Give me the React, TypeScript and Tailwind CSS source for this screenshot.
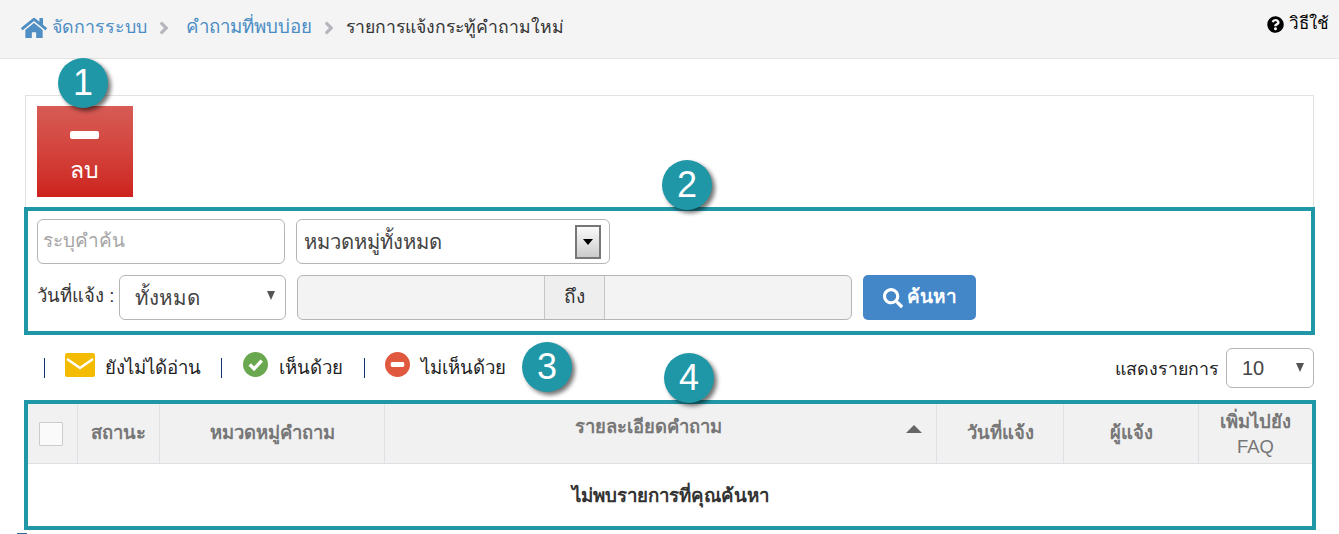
import { FaHome, FaSearch, FaQuestionCircle, FaAngleRight } from 'react-icons/fa'

const FONT = '"Liberation Sans", "Noto Sans", sans-serif'

function Badge({ n, className }: { n: number; className: string }) {
  return (
    <div className={`absolute w-[50px] h-[50px] rounded-full bg-[#1f97a7] text-white text-[36px] leading-[50px] text-center shadow-[3px_3px_4px_rgba(0,0,0,0.55)] ${className}`}>
      {n}
    </div>
  )
}

function Caret({ className = '' }: { className?: string }) {
  return <span className={`w-0 h-0 border-x-[4px] border-x-transparent border-t-[9px] border-t-[#555] ${className}`} />
}

const COLS = [
  { label: 'สถานะ', w: 'w-[82px]' },
  { label: 'หมวดหมู่คำถาม', w: 'w-[225px]' },
]

export default function App() {
  return (
    <div className="relative w-[1339px] h-[534px] bg-white overflow-hidden text-[#333]" style={{ fontFamily: FONT }}>
      {/* Breadcrumb */}
      <div className="h-[59px] bg-[#f4f4f4] border-b border-[#e4e4e4] flex items-start justify-between pl-[21px] pr-[10px]">
        <div className="flex items-center h-[55px]">
          <FaHome className="w-[26px] h-[24px] text-[#4f8fc4]" />
          <span className="ml-[5px] text-[17.8px] text-[#4a8dc4]">จัดการระบบ</span>
          <FaAngleRight className="w-[16px] h-[20px] ml-[9px] mr-[14px] text-[#b5b5bd]" />
          <span className="text-[18.7px] text-[#4a8dc4]">คำถามที่พบบ่อย</span>
          <FaAngleRight className="w-[16px] h-[20px] ml-[9px] mr-[9px] text-[#b5b5bd]" />
          <span className="text-[17.6px] text-[#333]">รายการแจ้งกระทู้คำถามใหม่</span>
        </div>
        <div className="flex items-center gap-[5px] h-[48px] text-[17px] text-black">
          <FaQuestionCircle className="w-[17px] h-[17px]" />
          วิธีใช้
        </div>
      </div>

      {/* Toolbar panel */}
      <div className="mt-[36px] ml-[25px] mr-[25px] h-[113px] border-x border-t border-[#e2e2e2] pt-[10px] pl-[11px]">
        <div className="w-[96px] h-[91px] bg-gradient-to-b from-[#d75b55] to-[#cd211c] flex flex-col items-center text-white">
          <div className="mt-[25px] -ml-[2px] w-[29px] h-[8px] bg-white rounded-[2px]" />
          <span className="mt-[16px] -ml-[1px] text-[23px] leading-[30px]">ลบ</span>
        </div>
      </div>

      {/* Search box */}
      <div className="ml-[24px] w-[1291px] h-[128px] border-[4px] border-[#1f97a7] pt-[8px] pl-[9px] -mt-[1px]">
        <div className="flex gap-[11px]">
          <div className="w-[248px] h-[45px] border border-[#b5b5b5] rounded-[6px] flex items-center px-[5px] text-[19px] text-[#a5a5a5]">ระบุคำค้น</div>
          <div className="w-[314px] h-[45px] border border-[#b5b5b5] rounded-[6px] flex items-center justify-between pl-[7px] pr-[8px] text-[20.2px] text-[#444]">
            <span className="mt-[2px]">หมวดหมู่ทั้งหมด</span>
            <span className="w-[26px] h-[34px] border-2 border-[#777] bg-gradient-to-b from-[#fafafa] to-[#ccc] flex items-center justify-center">
              <span className="w-0 h-0 border-x-[5px] border-x-transparent border-t-[6px] border-t-black" />
            </span>
          </div>
        </div>
        <div className="flex items-center mt-[11px] h-[45px]">
          <span className="w-[82px] text-[18.5px] -mt-[4px]">วันที่แจ้ง :</span>
          <div className="w-[167px] h-[45px] border border-[#b5b5b5] rounded-[6px] flex items-center justify-between pl-[15px] pr-[10px] text-[20.5px] text-[#444]">
            <span className="mt-[1px]">ทั้งหมด</span>
            <Caret className="-mt-[4px]" />
          </div>
          <div className="ml-[11px] w-[555px] h-[45px] border border-[#b5b5b5] rounded-[6px] bg-[#f3f3f3] flex overflow-hidden">
            <div className="w-[246px]" />
            <div className="w-[61px] border-x border-[#c5c5c5] bg-[#eee] flex items-center justify-center text-[19px]">ถึง</div>
            <div className="flex-1" />
          </div>
          <button className="ml-[11px] w-[113px] h-[45px] rounded-[5px] bg-[#4387c9] text-white font-bold text-[19px] flex items-center justify-center gap-[4px]">
            <FaSearch className="w-[20px] h-[20px]" />
            ค้นหา
          </button>
        </div>
      </div>

      {/* Legend */}
      <div className="h-[65px] flex items-center justify-between pl-[44px] pr-[25px] text-[18.6px] text-[#222]">
        <div className="flex items-center">
          <span className="w-px h-[20px] bg-[#123070] mt-[2px]" />
          <svg viewBox="0 0 30 24" className="ml-[20px] w-[30px] h-[24px] -mt-[5px]">
            <rect width="30" height="24" rx="2" fill="#f3bc00" />
            <path d="M2 6l13 9 13-9" fill="none" stroke="#fff" strokeWidth="2.5" />
          </svg>
          <span className="ml-[10px]">ยังไม่ได้อ่าน</span>
          <span className="ml-[20px] w-px h-[20px] bg-[#123070] mt-[2px]" />
          <svg viewBox="0 0 26 26" className="ml-[21px] w-[25px] h-[25px] -mt-[6px]">
            <circle cx="13" cy="13" r="13" fill="#6aa84f" />
            <path d="M7 13l4.5 4.5L19.5 9" fill="none" stroke="#fff" strokeWidth="3.5" />
          </svg>
          <span className="ml-[11px]">เห็นด้วย</span>
          <span className="ml-[21px] w-px h-[20px] bg-[#123070] mt-[2px]" />
          <svg viewBox="0 0 26 26" className="ml-[20px] w-[25px] h-[25px] -mt-[6px]">
            <circle cx="13" cy="13" r="13" fill="#e0593f" />
            <rect x="6" y="10.5" width="14" height="5" rx="1.5" fill="#fff" />
          </svg>
          <span className="ml-[11px]">ไม่เห็นด้วย</span>
        </div>
        <div className="flex items-center gap-[7px]">
          <span className="mt-[4px] text-[17.8px]">แสดงรายการ</span>
          <div className="w-[88px] h-[40px] border border-[#b5b5b5] rounded-[6px] flex items-center justify-between pl-[15px] pr-[9px] text-[20px] text-[#444]">
            10
            <Caret />
          </div>
        </div>
      </div>

      {/* Table */}
      <div className="ml-[24px] w-[1292px] h-[130px] border-[4px] border-[#1f97a7]">
        <div className="h-[60px] bg-[#f1f1f1] border-b border-[#dde1e5] flex text-[18.4px] font-bold text-[#777]">
          <div className="w-[50px] border-r border-[#dde1e5] flex items-center justify-center pr-[4px]">
            <span className="w-[24px] h-[24px] border border-[#ccc] bg-[#fafafa] rounded-[1px]" />
          </div>
          {COLS.map(c => (
            <div key={c.label} className={`${c.w} border-r border-[#dde1e5] flex items-center justify-center pb-[2px]`}>{c.label}</div>
          ))}
          <div className="relative w-[552px] border-r border-[#dde1e5] flex justify-center pt-[9px] pr-[24px]">
            รายละเอียดคำถาม
            <span className="absolute right-[14px] top-[21px] w-0 h-0 border-x-[8px] border-x-transparent border-b-[8px] border-b-[#666]" />
          </div>
          <div className="w-[127px] border-r border-[#dde1e5] flex items-center justify-center pb-[2px]">วันที่แจ้ง</div>
          <div className="w-[135px] border-r border-[#dde1e5] flex items-center justify-center pb-[2px]">ผู้แจ้ง</div>
          <div className="flex-1 flex flex-col items-center justify-center leading-[27px]">
            <span>เพิ่มไปยัง</span>
            <span className="font-normal -mt-[2px]">FAQ</span>
          </div>
        </div>
        <div className="h-[62px] flex items-center justify-center pt-[2px] font-bold text-[18.7px] text-[#333]">ไม่พบรายการที่คุณค้นหา</div>
      </div>

      <Badge n={1} className="left-[58px] top-[58px]" />
      <Badge n={2} className="left-[662px] top-[160px]" />
      <Badge n={3} className="left-[522px] top-[342px]" />
      <Badge n={4} className="left-[664px] top-[353px]" />
      {/* top edge of the next badge, cut off by the screenshot */}
      <div className="absolute left-[17px] bottom-0 w-[10px] h-px bg-[#2a6f8f]" />
    </div>
  )
}
